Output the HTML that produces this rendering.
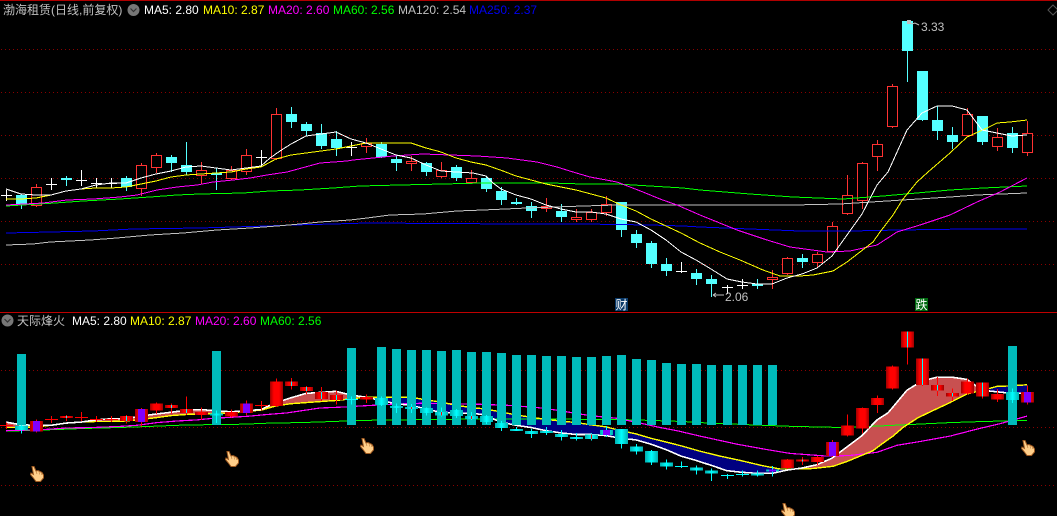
<!DOCTYPE html>
<html><head><meta charset="utf-8"><style>
html,body{margin:0;padding:0;background:#000;width:1057px;height:516px;overflow:hidden}
svg{display:block;position:absolute;left:0;top:0}
text{font-family:"Liberation Sans","WenQuanYi Zen Hei","Noto Sans CJK SC",sans-serif;font-size:12px}
</style></head><body>
<svg width="1057" height="516" viewBox="0 0 1057 516" xmlns="http://www.w3.org/2000/svg">
<defs>
<linearGradient id="gr" x1="0" x2="1" y1="0" y2="0"><stop offset="0" stop-color="#a00000"/><stop offset=".3" stop-color="#f00"/><stop offset=".7" stop-color="#f00"/><stop offset="1" stop-color="#a00000"/></linearGradient>
<linearGradient id="gc" x1="0" x2="1" y1="0" y2="0"><stop offset="0" stop-color="#00b0b0"/><stop offset=".5" stop-color="#0ff"/><stop offset="1" stop-color="#00b0b0"/></linearGradient>
</defs>
<g id="chart"></g>
<rect x="0" y="0" width="1057" height="1" fill="#b00000"/>
<rect x="0" y="312" width="1057" height="1" fill="#c00000"/>
<text x="3" y="14" fill="#c0c0c0">渤海租赁(日线,前复权)</text>
<circle cx="133.5" cy="10" r="6" fill="#777"/><path d="M130.5 8.5l3 3 3-3" fill="none" stroke="#333" stroke-width="1.2"/>
<text x="144" y="14" fill="#fff">MA5: 2.80</text>
<text x="203" y="14" fill="#ff0">MA10: 2.87</text>
<text x="268" y="14" fill="#f0f">MA20: 2.60</text>
<text x="333" y="14" fill="#0f0">MA60: 2.56</text>
<text x="398" y="14" fill="#c0c0c0">MA120: 2.54</text>
<text x="469" y="14" fill="#0000f0">MA250: 2.37</text>
<path d="M1053 5l5 5-5 5-5-5z" fill="none" stroke="#555"/>
<circle cx="7.5" cy="320.5" r="6" fill="#777"/><path d="M4.5 319l3 3 3-3" fill="none" stroke="#333" stroke-width="1.2"/>
<text x="17" y="325" fill="#c0c0c0">天际烽火</text>
<text x="72" y="325" fill="#fff">MA5: 2.80</text>
<text x="130" y="325" fill="#ff0">MA10: 2.87</text>
<text x="195" y="325" fill="#f0f">MA20: 2.60</text>
<text x="260" y="325" fill="#0f0">MA60: 2.56</text>
<path d="M909 22l3 2 3-1 4 2" fill="none" stroke="#c0c0c0"/><rect x="907" y="20" width="4" height="4" fill="#c0c0c0"/>
<text x="921" y="31" fill="#c0c0c0">3.33</text>
<path d="M713 295h11M713 295l3-2M713 295l3 2" fill="none" stroke="#c0c0c0"/>
<text x="725" y="301" fill="#c0c0c0">2.06</text>
<rect x="615" y="298" width="13" height="13" fill="#0a3a6a"/><text x="615.5" y="309" fill="#fff">财</text>
<rect x="915" y="298" width="13" height="13" fill="#006a10"/><text x="915.5" y="309" fill="#fff">跌</text>
</svg>
<script>
var C=[[-1,'w',190,195,195,200,'R'],[0,'c',194,195,204,208,'c'],[1,'r',184,187,206,206,'rp'],[2,'w',178,184,184,189,'R'],[3,'c',176,178,180,185,'rc'],[4,'w',170,180,180,185,'R'],[5,'w',178,183,183,187,'R'],[6,'w',178,183,183,187,'R'],[7,'c',176,178,187,190,'rc'],[8,'r',163,165,189,195,'rp'],[9,'r',153,155,168,172,'r'],[10,'c',155,157,163,171,'rc'],[11,'c',142,165,172,174,'rc'],[12,'r',162,170,176,183,'r'],[13,'c',168,173,175,189,'c'],[14,'r',166,170,179,179,'r'],[15,'r',149,155,172,174,'rp'],[16,'w',150,157,157,166,'R'],[17,'r',108,114,159,159,'r'],[18,'c',107,114,122,127,'rc'],[19,'c',122,124,131,135,'rc'],[20,'c',124,133,146,148,'rc'],[21,'c',131,139,148,155,'rc'],[22,'w',142,147,147,155,'C'],[23,'r',138,143,147,152,'r'],[24,'c',142,144,157,157,'c'],[25,'c',155,159,163,170,'c'],[26,'r',156,161,164,170,'cr'],[27,'c',162,163,172,175,'c'],[28,'r',162,170,177,177,'cr'],[29,'c',165,167,178,180,'c'],[30,'r',170,178,183,183,'cr'],[31,'c',176,178,189,191,'c'],[32,'c',187,191,200,204,'c'],[33,'c',198,202,204,204,'c'],[34,'c',202,206,211,217,'c'],[35,'r',198,206,209,211,'c'],[36,'c',204,211,217,221,'c'],[37,'r',209,217,220,221,'c'],[38,'r',209,212,220,221,'cr'],[39,'r',196,204,213,215,'cp'],[40,'c',202,202,230,236,'c'],[41,'c',230,234,243,247,'c'],[42,'c',241,243,264,267,'c'],[43,'c',258,264,271,275,'c'],[44,'w',262,271,271,272,'C'],[45,'c',269,273,279,284,'c'],[46,'c',275,279,284,296,'c'],[47,'w',285,287,287,293,'C'],[48,'w',279,285,285,288,'C'],[49,'c',279,284,286,288,'c'],[50,'r',270,277,280,288,'cp'],[51,'r',257,258,274,274,'r'],[52,'c',254,258,262,267,'rc'],[53,'r',252,254,263,267,'r'],[54,'r',222,226,252,252,'rp'],[55,'r',175,195,214,214,'r'],[56,'r',162,163,201,208,'r'],[57,'r',140,144,157,170,'r'],[58,'r',84,86,127,127,'r'],[59,'c',21,21,51,81,'rc'],[60,'c',71,71,120,120,'rc'],[61,'c',106,120,131,139,'rc'],[62,'c',127,135,142,148,'rc'],[63,'r',108,114,136,136,'r'],[64,'c',116,116,142,144,'rc'],[65,'r',128,137,147,150,'r'],[66,'c',127,133,148,152,'c'],[67,'r',121,133,153,155,'rp']];
var M5=[6,189,21,194,36,195,51,195,66,191,81,189,96,185,111,183,126,183,141,178,156,174,171,171,186,167,201,166,216,168,231,170,246,168,261,166,270,158,280,151,291,144,306,136,321,134,336,132,351,139,366,143,381,149,396,155,411,158,426,165,441,171,456,172,473,173,486,176,493,183,501,189,516,195,531,199,546,205,561,209,576,212,591,212,606,214,621,219,636,222,651,230,666,240,681,252,696,260,711,269,727,279,742,282,757,284,772,284,787,278,802,274,817,268,832,256,847,235,862,214,877,185,888,172,907,130,922,113,937,106,952,106,967,110,982,130,997,133,1012,136,1027,135];
var M10=[6,199,21,199,36,198,51,195,66,191,81,189,96,188,111,188,126,187,141,184,156,181,171,177,186,175,201,174,216,173,231,172,246,169,261,167,276,159,291,155,306,153,321,151,336,149,351,146,366,143,381,143,396,143,411,143,426,148,441,152,456,158,471,162,486,165,503,171,516,176,531,180,546,184,561,187,576,190,591,194,606,198,621,205,636,211,651,219,666,226,681,233,700,243,720,252,740,260,763,270,780,276,800,276,813,275,833,271,847,262,860,252,873,242,880,232,893,215,903,199,917,182,928,172,950,153,967,137,987,128,997,123,1010,122,1027,120];
var M20=[6,205,43,203,67,200,93,199,120,197,137,195,157,190,177,187,197,185,213,182,233,180,250,178,267,175,287,172,320,163,347,161,353,160,373,158,393,156,423,154,477,156,507,158,537,162,557,167,573,172,590,177,617,182,630,187,643,192,660,199,677,205,700,215,737,230,767,240,790,247,827,252,850,251,877,245,897,232,920,225,950,215,977,202,1000,192,1027,178];
var M60=[6,206,55,203,83,201,120,199,150,197,177,195,200,194,243,193,270,191,300,190,333,188,360,186,400,185,443,184,483,183,550,183,583,184,617,184,650,186,683,188,700,190,750,194,793,197,843,199,883,196,917,193,950,190,983,188,1027,186];
var M120=[6,245,33,244,50,242,90,240,117,238,150,235,183,233,217,230,250,228,277,226,300,224,320,222,350,220,367,218,390,215,423,214,457,211,483,210,527,208,583,206,617,205,683,205,793,205,840,204,887,201,950,197,977,195,1027,193];
var M250=[6,233,50,232,93,231,133,229,200,228,267,226,293,225,333,224,367,223,517,224,583,224,650,225,683,226,700,227,750,229,800,231,850,231,900,230,967,229,1027,229];
var B={0:354,13:351,22:348,24:347,25:349,26:350,27:350,28:351,29:350,30:352,31:352,32:353,33:355,34:355,35:356,36:356,37:357,38:357,39:356,40:355,41:359,42:360,43:363,44:364,45:364,46:365,47:365,48:365,49:365,50:365,66:346};
function L(y){return 320+.54*y}
function PX(k){return Math.floor(21.3+15.015*k)}
function R(x,y,w,h,f){return '<rect x="'+x+'" y="'+y+'" width="'+w+'" height="'+h+'" fill="'+f+'"/>'}
function PL(a,map,col,w){var p=[];for(var i=0;i<a.length;i+=2)p.push(a[i]+','+map(a[i+1]).toFixed(1));return '<polyline points="'+p.join(' ')+'" fill="none" stroke="'+col+'" stroke-width="'+w+'" shape-rendering="crispEdges"/>'}
function I(a,x){for(var i=0;i<a.length-2;i+=2){if(x<=a[i+2]){return a[i+1]+(a[i+3]-a[i+1])*(x-a[i])/(a[i+2]-a[i])}}return a[a.length-1]}
var s='<g shape-rendering="crispEdges">';
[49,92,135,178,221,264,370,427,485].forEach(function(y){s+='<line x1="1" x2="1057" y1="'+(y+.5)+'" y2="'+(y+.5)+'" stroke="#8a0000" stroke-dasharray="1 3"/>'});
/* upper candles */
C.forEach(function(c){var x=PX(c[0]),t=c[1],hi=c[2],top=c[3],bot=c[4],lo=c[5];
 if(t=='w'){s+=R(x,hi,1,lo-hi+1,'#fff')+R(x-5,top,11,1,'#fff')}
 else if(t=='c'){s+=R(x,hi,1,lo-hi+1,'#54ffff')+R(x-5,top,11,Math.max(bot-top,1),'#54ffff')}
 else{s+=R(x,hi,1,lo-hi+1,'#ff3232')+'<rect x="'+(x-4.5)+'" y="'+(top+.5)+'" width="10" height="'+Math.max(bot-top-1,1)+'" fill="#000" stroke="#ff3232"/>'}
});
s+=PL(M250,function(y){return y},'#0000f0',1)+PL(M120,function(y){return y},'#c0c0c0',1)+PL(M60,function(y){return y},'#00ff00',1)+PL(M20,function(y){return y},'#ff00ff',1)+PL(M10,function(y){return y},'#ffff00',1)+PL(M5,function(y){return y},'#ffffff',1);
/* lower fill */
for(var x=6;x<=1027;x++){var a=L(I(M5,x)),b=L(I(M10,x));s+=R(x,Math.min(a,b).toFixed(1),1,Math.abs(a-b).toFixed(1),a<b?'#c85050':'#000080')}
s+=PL(M60,L,'#00ff00',1)+PL(M20,L,'#ff00ff',1.2)+PL(M10,L,'#ffff00',1.4)+PL(M5,L,'#ffffff',1.6);
for(var k in B){s+=R(PX(+k)-4,B[k],9,425-B[k],'#00bbbb')}
/* lower candles */
C.forEach(function(c){var x=PX(c[0]),sp=c[6],hi=L(c[2]),top=L(c[3]),bot=L(c[4]),lo=L(c[5]);
 var base=sp[0].toLowerCase()=='r'?'r':'c',col=base=='r'?'#ff0000':'#00ffff';
 s+=R(x,hi.toFixed(1),1,(lo-hi+1).toFixed(1),col);
 if(sp=='R'||sp=='C'){s+=R(x-6,Math.round(top),13,1,col);return}
 var h=Math.max(bot-top,2);
 s+=R(x-6,top.toFixed(1),13,h.toFixed(1),'url(#g'+base+')');
 if(sp[1]=='c')s+=R(x,top.toFixed(1),1,h.toFixed(1),'#00ffff');
 if(sp[1]=='r')s+=R(x,top.toFixed(1),1,h.toFixed(1),'#ff0000');
 if(sp[1]=='p')s+=R(x-3,top.toFixed(1),7,h.toFixed(1),'#8000ff');
});
s+='</g>';
/* hand cursors */
[[30,466],[225,451],[360,438],[1021,440],[781,503]].forEach(function(p){
 s+='<g transform="translate('+p[0]+','+p[1]+')"><path d="M2 .5L4 .5 6 5 8 4.5 10 5.5 12 6.5 13.5 9 13.5 12 10.5 15.5 6 15.5 3 11.5 .5 8.5 1 7 3.5 8.5Z" fill="#ffcf8a" stroke="#a05a20" stroke-width="1"/><path d="M6 5l1 3M9 5.5l.6 3M11.5 7l.3 2" stroke="#b87838" stroke-width=".6" fill="none"/></g>';
});
document.getElementById('chart').innerHTML=s;
</script>
</body></html>
